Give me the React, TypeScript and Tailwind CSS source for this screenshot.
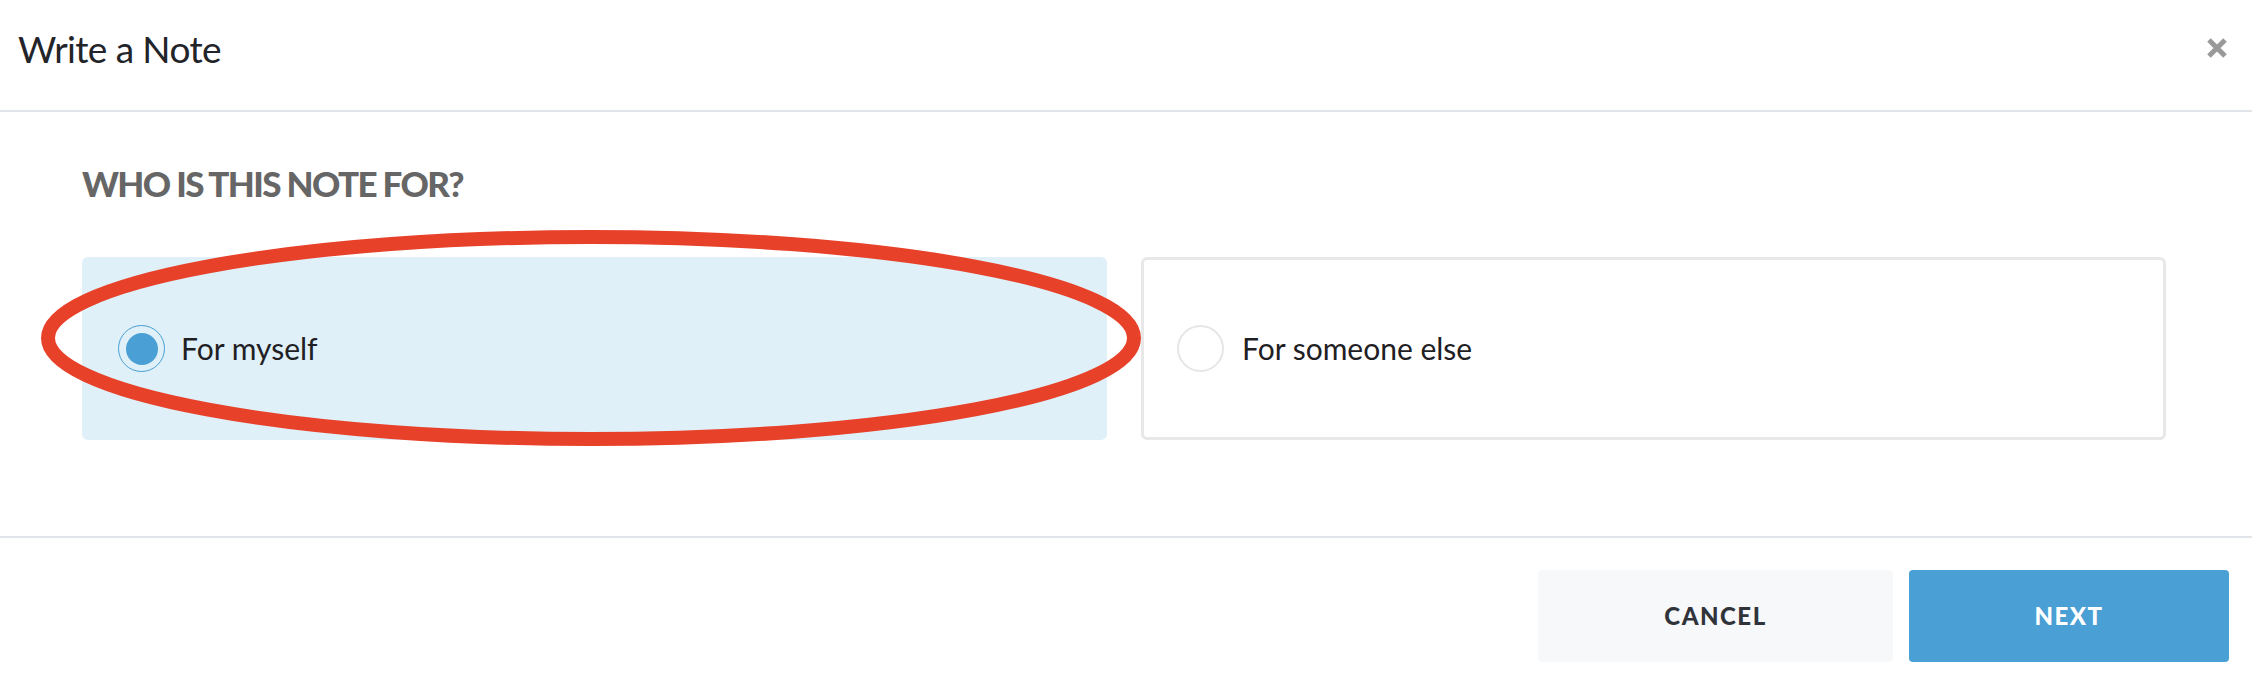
import React from 'react';

const body = { fontFamily: 'Lato, "Noto Sans", sans-serif' };

const Radio: React.FC<{ checked?: boolean }> = ({ checked }) =>
  checked ? (
    <span className="flex h-[47px] w-[47px] shrink-0 items-center justify-center rounded-full border-[1.5px] border-[#4a9fd4]">
      <span className="h-[32px] w-[32px] rounded-full bg-[#4a9fd4]" />
    </span>
  ) : (
    <span className="h-[47px] w-[47px] shrink-0 rounded-full border-2 border-[#e6e6e6] bg-white" />
  );

export default function App() {
  return (
    <div className="relative flex h-[684px] w-[2252px] flex-col bg-white" style={body}>
      {/* header */}
      <div className="flex h-[112px] items-center justify-between border-b-2 border-[#e1e4e8] pb-[14px] pl-[18px] pr-[24px]">
        <h1 className="text-[37px] leading-none tracking-[-0.6px] text-[#222429]">Write a Note</h1>
        <button className="text-[#999999]">
          <svg width="22" height="22" viewBox="0 0 22 22">
            <path d="M3 3 L19 19 M19 3 L3 19" stroke="currentColor" strokeWidth="5" strokeLinecap="butt" />
          </svg>
        </button>
      </div>

      {/* body */}
      <div className="flex h-[426px] flex-col border-b-2 border-[#e1e4e8] pl-[82px] pr-[86px] pt-[54px]">
        <h2 className="text-[35px] font-black uppercase leading-none tracking-[-1.65px] text-[#666666]">
          Who is this note for?
        </h2>
        <div className="mt-[56px] grid grid-cols-2 gap-[34px]">
          <label className="flex h-[183px] items-center gap-[16px] rounded-[6px] bg-[#dff0f8] pl-[36px]">
            <Radio checked />
            <span className="text-[30px] text-[#1f2024]">For myself</span>
          </label>
          <label className="flex h-[183px] items-center gap-[18px] rounded-[6px] border-[3px] border-[#e8e8e8] bg-white pl-[33px]">
            <Radio />
            <span className="text-[30px] text-[#1f2024]">For someone else</span>
          </label>
        </div>
      </div>

      {/* footer */}
      <div className="flex flex-1 items-start justify-end gap-[16px] pr-[23px] pt-[32px]">
        <button className="flex h-[92px] w-[355px] items-center justify-center rounded-[4px] bg-[#f7f8fa] text-[24px] font-black uppercase tracking-[1.5px] text-[#30343a]">
          Cancel
        </button>
        <button className="flex h-[92px] w-[320px] items-center justify-center rounded-[4px] bg-[#4a9fd4] text-[24px] font-black uppercase tracking-[1.5px] text-white">
          Next
        </button>
      </div>

      {/* annotation */}
      <svg className="pointer-events-none absolute left-0 top-0" width="2252" height="684">
        <ellipse cx="591" cy="338" rx="543" ry="101" fill="none" stroke="#e8412a" strokeWidth="14" />
      </svg>
    </div>
  );
}
